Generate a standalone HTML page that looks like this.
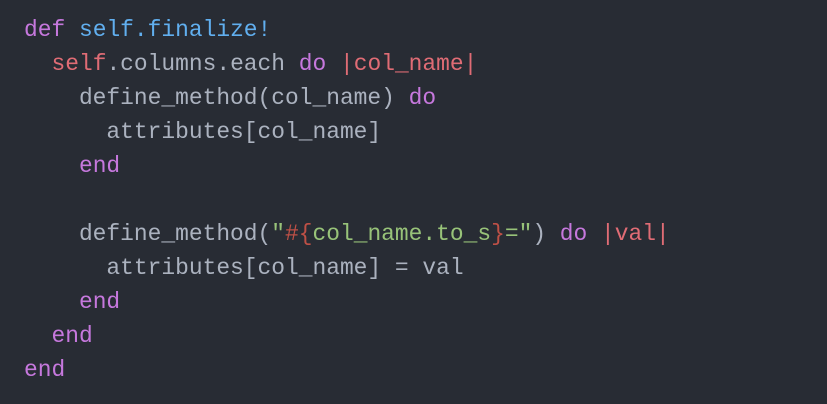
<!DOCTYPE html>
<html><head><meta charset="utf-8"><style>
html,body{margin:0;padding:0;background:#282c34;width:827px;height:404px;overflow:hidden}
pre{margin:0;position:absolute;left:24px;top:13px;font-family:"Liberation Mono",monospace;font-size:22.9px;line-height:34px;color:#abb2bf}
.k{color:#c678dd}.f{color:#61afef}.r{color:#e06c75}.s{color:#98c379}.i{color:#be5046}
</style></head><body><pre><span class="k">def</span> <span class="f">self.finalize!</span>
  <span class="r">self</span>.columns.each <span class="k">do</span> <span class="r">|col_name|</span>
    define_method(col_name) <span class="k">do</span>
      attributes[col_name]
    <span class="k">end</span>

    define_method(<span class="s">"</span><span class="i">#{</span><span class="s">col_name.to_s</span><span class="i">}</span><span class="s">="</span>) <span class="k">do</span> <span class="r">|val|</span>
      attributes[col_name] = val
    <span class="k">end</span>
  <span class="k">end</span>
<span class="k">end</span></pre></body></html>
